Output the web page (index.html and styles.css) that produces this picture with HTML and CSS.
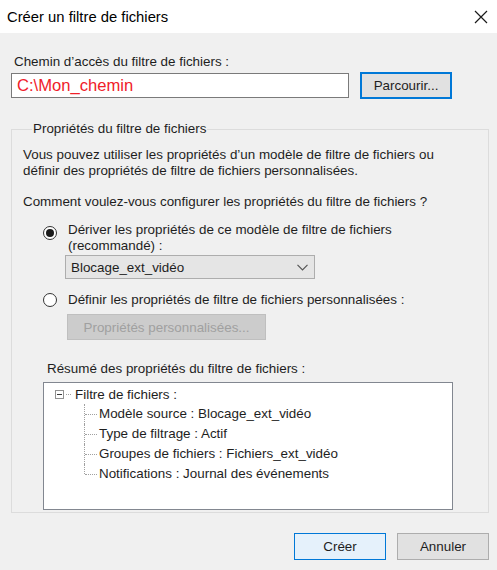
FILE: index.html
```html
<!DOCTYPE html>
<html lang="fr">
    <head>
        <meta charset="utf-8" />
        <title>Créer un filtre de fichiers</title>
        <link rel="stylesheet" href="styles.css">
    </head>

    <body>
        <div class="dialog">
            <div class="titlebar">
                <span class="title">Créer un filtre de fichiers</span>
                <svg class="close" width="14" height="14" viewBox="0 0 14 14">
                    <path d="M1 1 L13 13 M13 1 L1 13" stroke="#1a1a1a" stroke-width="1.2" fill="none" />
                </svg>
            </div>

            <div class="body">
                <div class="path-label">Chemin d’accès du filtre de fichiers :</div>
                <div class="path-row">
                    <div class="textbox">C:\Mon_chemin</div>
                    <div class="btn btn-focus">Parcourir...</div>
                </div>

                <fieldset class="group">
                    <legend>Propriétés du filtre de fichiers</legend>
                    <p class="intro">Vous pouvez utiliser les propriétés d’un modèle de filtre de fichiers ou définir des propriétés de filtre de fichiers personnalisées.</p>
                    <p class="question">Comment voulez-vous configurer les propriétés du filtre de fichiers ?</p>

                    <div class="radio-row first">
                        <span class="radio checked"></span>
                        <span class="radio-text">Dériver les propriétés de ce modèle de filtre de fichiers<br>(recommandé) :</span>
                    </div>
                    <div class="combo">
                        <span>Blocage_ext_vidéo</span>
                        <svg width="11" height="7" viewBox="0 0 11 7">
                            <path d="M0.5 0.8 L5.5 5.8 L10.5 0.8" stroke="#555" stroke-width="1.2" fill="none" />
                        </svg>
                    </div>

                    <div class="radio-row second">
                        <span class="radio"></span>
                        <span class="radio-text">Définir les propriétés de filtre de fichiers personnalisées :</span>
                    </div>
                    <div class="btn btn-disabled">Propriétés personnalisées...</div>

                    <div class="summary-label">Résumé des propriétés du filtre de fichiers :</div>
                    <div class="tree">
                        <div class="tree-root">
                            <span class="expander"></span>
                            <span class="root-dots"></span>
                            <span>Filtre de fichiers :</span>
                        </div>
                        <ul class="tree-children">
                            <li>Modèle source : Blocage_ext_vidéo</li>
                            <li>Type de filtrage : Actif</li>
                            <li>Groupes de fichiers : Fichiers_ext_vidéo</li>
                            <li>Notifications : Journal des événements</li>
                        </ul>
                    </div>
                </fieldset>

                <div class="actions">
                    <div class="btn btn-default">Créer</div>
                    <div class="btn">Annuler</div>
                </div>
            </div>
        </div>
    </body>
</html>
```

FILE: styles.css
```css
html, body {
    margin: 0;
    padding: 0;
}
body {
    width: 497px;
    height: 570px;
    background: #f0f0f0;
    font-family: "Liberation Sans", Arial, sans-serif;
    font-size: 13.4px;
    color: #1e1e1e;
    overflow: hidden;
}
.titlebar {
    height: 33px;
    background: #ffffff;
    display: flex;
    align-items: center;
    justify-content: space-between;
    padding: 0 8px 0 7px;
}
.title {
    font-size: 14.8px;
    color: #000000;
}
.close {
    margin-right: 1px;
}
.body {
    padding: 0 8px 0 11px;
}
.path-label {
    line-height: 16px;
    margin-top: 21px;
    padding-left: 3px;
}
.path-row {
    display: flex;
    align-items: center;
    gap: 11px;
    margin-top: 2px;
}
.textbox {
    width: 331px;
    height: 23px;
    line-height: 23px;
    padding-left: 5px;
    background: #ffffff;
    border: 1px solid #7a7a7a;
    color: #f0202a;
    font-size: 16.6px;
}
.btn {
    box-sizing: border-box;
    display: flex;
    align-items: center;
    justify-content: center;
    width: 92px;
    height: 27px;
    background: #e1e1e1;
    border: 1px solid #adadad;
}
.btn-focus {
    border: 2px solid #0078d7;
}
.group {
    box-sizing: border-box;
    width: 478px;
    height: 392px;
    margin: 22px 0 0 0;
    padding: 10px 11px 0 11px;
    border: 1px solid #dcdcdc;
    min-width: 0;
}
.group legend {
    padding: 0 1px;
    margin-left: 9px;
    line-height: 16px;
}
.intro, .question {
    margin: 0;
    line-height: 16px;
}
.intro {
    max-width: 425px;
}
.question {
    margin-top: 15px;
}
.radio-row {
    display: flex;
    align-items: flex-start;
    gap: 11px;
    padding-left: 20px;
    line-height: 16px;
}
.radio-row.first {
    margin-top: 12px;
}
.radio-row.second {
    margin-top: 13px;
}
.radio {
    box-sizing: border-box;
    width: 14px;
    height: 14px;
    border: 1px solid #333333;
    border-radius: 50%;
    background: #ffffff;
    display: flex;
    align-items: center;
    justify-content: center;
    flex: none;
}
.radio-row.first .radio {
    margin-top: 4px;
}
.radio-row.second .radio {
    margin-top: 1px;
}
.radio.checked::after {
    content: "";
    width: 8px;
    height: 8px;
    border-radius: 50%;
    background: #1a1a1a;
}
.combo {
    box-sizing: border-box;
    width: 250px;
    height: 24px;
    margin: 1px 0 0 42px;
    padding: 0 6px 0 5px;
    display: flex;
    align-items: center;
    justify-content: space-between;
    background: #e5e5e5;
    border: 1px solid #adadad;
}
.btn-disabled {
    width: 199px;
    height: 26px;
    margin: 6px 0 0 44px;
    background: #cccccc;
    border-color: #bfbfbf;
    color: #a0a0a0;
}
.summary-label {
    margin: 21px 0 0 24px;
    line-height: 16px;
}
.tree {
    box-sizing: border-box;
    width: 410px;
    height: 128px;
    margin: 5px 0 0 20px;
    padding: 1px 0 0 11px;
    background: #ffffff;
    border: 1px solid #828790;
}
.tree-root {
    display: flex;
    align-items: center;
    height: 20px;
}
.expander {
    box-sizing: border-box;
    width: 9px;
    height: 9px;
    border: 1px solid #919191;
    background: linear-gradient(#3a3a3a, #3a3a3a) center / 5px 1px no-repeat;
}
.root-dots {
    width: 5px;
    border-top: 1px dotted #a0a0a0;
    margin: 0 4px 0 2px;
}
.tree-children {
    list-style: none;
    margin: 0 0 0 29px;
    padding: 0;
}
.tree-children li {
    position: relative;
    height: 20px;
    line-height: 20px;
    padding-left: 15px;
}
.tree-children li::before {
    content: "";
    position: absolute;
    left: 0;
    top: 0;
    height: 20px;
    border-left: 1px dotted #a0a0a0;
}
.tree-children li:last-child::before {
    height: 10px;
}
.tree-children li::after {
    content: "";
    position: absolute;
    left: 1px;
    top: 10px;
    width: 12px;
    border-top: 1px dotted #a0a0a0;
}
.actions {
    display: flex;
    justify-content: flex-end;
    gap: 11px;
    margin-top: 20px;
}
.btn-default {
    background: #e5f1fb;
    border-color: #0078d7;
}
```
